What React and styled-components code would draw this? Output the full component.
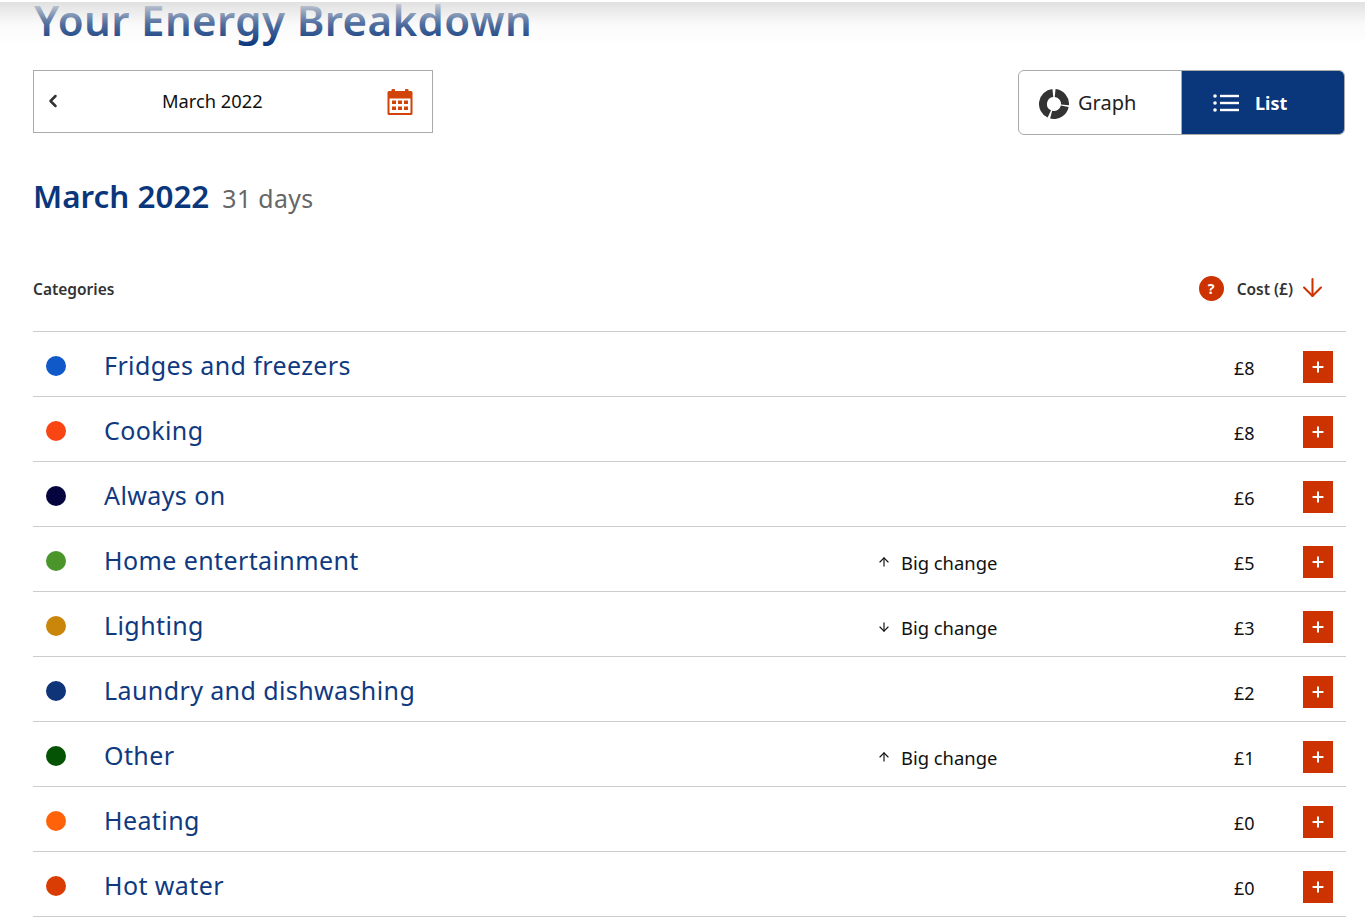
import React from 'react'
import styled, { createGlobalStyle } from 'styled-components'
import { ChevronLeft, ArrowDown, ArrowUp, Plus } from 'lucide-react'

const CATEGORIES = [
  { name: 'Fridges and freezers', color: '#0f5ac8', cost: '£8' },
  { name: 'Cooking', color: '#f94413', cost: '£8' },
  { name: 'Always on', color: '#04043f', cost: '£6' },
  { name: 'Home entertainment', color: '#4a962b', cost: '£5', change: 'up' },
  { name: 'Lighting', color: '#c9860a', cost: '£3', change: 'down' },
  { name: 'Laundry and dishwashing', color: '#0f3478', cost: '£2' },
  { name: 'Other', color: '#045204', cost: '£1', change: 'up' },
  { name: 'Heating', color: '#ff6208', cost: '£0' },
  { name: 'Hot water', color: '#d93d04', cost: '£0' },
]

export default function App() {
  return (
    <Page>
      <GlobalStyle />
      <TopShade />
      <TitleBar>
        <Title>Your Energy Breakdown</Title>
      </TitleBar>
      <Controls>
        <MonthPicker>
          <ChevronLeft size={20} strokeWidth={3} color="#333" />
          <MonthLabel>March 2022</MonthLabel>
          <CalendarIcon />
        </MonthPicker>
        <ViewToggle>
          <GraphButton>
            <DonutIcon />
            Graph
          </GraphButton>
          <ListButton>
            <ListIcon />
            List
          </ListButton>
        </ViewToggle>
      </Controls>
      <PeriodHeading>
        <PeriodTitle>March 2022</PeriodTitle>
        <PeriodDays>31 days</PeriodDays>
      </PeriodHeading>
      <TableHead>
        <HeadLabel>Categories</HeadLabel>
        <CostHead>
          <HelpBadge>?</HelpBadge>
          <HeadLabel>Cost (£)</HeadLabel>
          <SortArrow>
            <ArrowDown size={29} strokeWidth={1.7} color="#cc3300" />
          </SortArrow>
        </CostHead>
      </TableHead>
      <div>
        {CATEGORIES.map(({ name, color, cost, change }) => (
          <Row key={name}>
            <Dot $color={color} />
            <RowName>{name}</RowName>
            <Change>
              {change === 'up' && <ArrowUp size={14} strokeWidth={2} />}
              {change === 'down' && <ArrowDown size={14} strokeWidth={2} />}
              {change && <span>Big change</span>}
            </Change>
            <Cost>{cost}</Cost>
            <ExpandButton>
              <Plus size={16} strokeWidth={3} color="#fff" />
            </ExpandButton>
          </Row>
        ))}
      </div>
    </Page>
  )
}

function CalendarIcon() {
  return (
    <svg width="28" height="28" viewBox="0 0 28 28" fill="#d24309">
      <rect x="5.500" y="1" width="3.500" height="6" rx="1" />
      <rect x="19" y="1" width="3.500" height="6" rx="1" />
      <path d="M3 3h22a1.500 1.500 0 0 1 1.500 1.500v21a1.500 1.500 0 0 1-1.500 1.500H3a1.500 1.500 0 0 1-1.500-1.500v-21A1.500 1.500 0 0 1 3 3zm0.500 7.500v14.500h21V10.500z" />
      <rect x="6" y="12.500" width="4" height="3.500" />
      <rect x="12" y="12.500" width="4" height="3.500" />
      <rect x="18" y="12.500" width="4" height="3.500" />
      <rect x="6" y="18.500" width="4" height="3.500" />
      <rect x="12" y="18.500" width="4" height="3.500" />
      <rect x="18" y="18.500" width="4" height="3.500" />
    </svg>
  )
}

function DonutIcon() {
  return (
    <svg width="30" height="30" viewBox="0 0 30 30" fill="none" stroke="#333" strokeWidth="8">
      <path d="M16.150 4.060A11 11 0 0 1 25.960 15.960" />
      <path d="M25.760 17.290A11 11 0 0 1 12.150 25.630" />
      <path d="M10.350 24.970A11 11 0 0 1 13.850 4.060" />
    </svg>
  )
}

function ListIcon() {
  return (
    <svg width="26" height="18" viewBox="0 0 26 18" fill="#fff">
      <circle cx="2" cy="2" r="1.800" />
      <circle cx="2" cy="9" r="1.800" />
      <circle cx="2" cy="16" r="1.800" />
      <rect x="7" y="0.800" width="19" height="2.400" />
      <rect x="7" y="7.800" width="19" height="2.400" />
      <rect x="7" y="14.800" width="19" height="2.400" />
    </svg>
  )
}

const GlobalStyle = createGlobalStyle`
  body {
    margin: 0;
    background: #fff;
    font-family: 'Noto Sans', 'Open Sans', sans-serif;
    overflow-x: hidden;
  }
`

const Page = styled.div`
  position: relative;
  width: 1365px;
  height: 923px;
  overflow: hidden;
  padding: 0 19px 0 33px;
  box-sizing: border-box;
`

const TopShade = styled.div`
  position: absolute;
  top: 2px;
  left: 0;
  right: 0;
  height: 44px;
  background: linear-gradient(
    to bottom,
    rgba(222, 222, 222, 0.92),
    rgba(238, 238, 238, 0.3) 50%,
    rgba(255, 255, 255, 0)
  );
  pointer-events: none;
`

const TitleBar = styled.div`
  height: 70px;
`

const Title = styled.h1`
  margin: 0 0 0 1px;
  font-size: 42px;
  line-height: 40px;
  font-weight: 600;
  letter-spacing: 0.4px;
  color: #0a367c;
  white-space: nowrap;
`

const Controls = styled.div`
  display: flex;
  justify-content: space-between;
  align-items: flex-start;
`

const MonthPicker = styled.div`
  width: 400px;
  height: 63px;
  box-sizing: border-box;
  border: 1px solid #aaa;
  display: flex;
  align-items: center;
  padding: 0 18px 0 9px;
  & > svg:first-child {
    margin-bottom: 2px;
  }
`

const MonthLabel = styled.span`
  font-size: 18.300px;
  color: #111;
  margin: 0 auto 2px 99px;
`

const ViewToggle = styled.div`
  display: flex;
  width: 327px;
  height: 65px;
  margin-right: 1px;
  box-sizing: border-box;
  border: 1px solid #aaa;
  border-radius: 6px;
  overflow: hidden;
`

const GraphButton = styled.div`
  width: 163px;
  box-sizing: border-box;
  border-right: 1px solid #aaa;
  display: flex;
  align-items: center;
  gap: 9px;
  padding-left: 20px;
  font-size: 20px;
  color: #222;
  & > svg {
    margin-top: 2px;
  }
`

const ListButton = styled.div`
  flex: 1;
  display: flex;
  align-items: center;
  gap: 16px;
  padding-left: 31px;
  font-size: 18px;
  font-weight: 700;
  color: #fff;
  background: #0a367c;
`

const PeriodHeading = styled.div`
  display: flex;
  align-items: baseline;
  gap: 13px;
  height: 113px;
  padding-top: 40px;
  box-sizing: border-box;
`

const PeriodTitle = styled.h2`
  margin: 0;
  font-size: 31.400px;
  line-height: 42px;
  font-weight: 600;
  color: #0a367c;
`

const PeriodDays = styled.span`
  font-size: 24.800px;
  letter-spacing: 0.4px;
  color: #666;
`

const TableHead = styled.div`
  display: flex;
  justify-content: space-between;
  align-items: center;
  height: 84px;
  box-sizing: border-box;
  padding: 0 23px 2px 0;
  border-bottom: 1px solid #ccc;
`

const HeadLabel = styled.span`
  font-size: 15.500px;
  font-weight: 600;
  color: #333;
`

const CostHead = styled.div`
  display: flex;
  align-items: center;
`

const HelpBadge = styled.span`
  width: 25px;
  height: 25px;
  border-radius: 50%;
  background: #cc3300;
  color: #fff;
  font-size: 14px;
  font-weight: 700;
  display: flex;
  align-items: center;
  justify-content: center;
  margin-right: 13px;
`

const SortArrow = styled.span`
  display: flex;
  margin: -2px -4px 0 5px;
`

const Row = styled.div`
  display: grid;
  grid-template-columns: 71px 773px 357px 69px 43px;
  align-items: center;
  height: 65px;
  box-sizing: border-box;
  border-bottom: 1px solid #ccc;
`

const Dot = styled.span`
  width: 20px;
  height: 20px;
  margin: 4px 0 0 13px;
  border-radius: 50%;
  background: ${(props) => props.$color};
`

const RowName = styled.span`
  padding-top: 2px;
  font-size: 25px;
  letter-spacing: 0.4px;
  color: #0f3a7f;
`

const Change = styled.span`
  display: flex;
  align-items: center;
  gap: 10px;
  padding-top: 6px;
  font-size: 18.400px;
  color: #111;
`

const Cost = styled.span`
  padding-top: 8px;
  font-size: 18px;
  color: #111;
`

const ExpandButton = styled.span`
  width: 30px;
  height: 32px;
  margin-top: 6px;
  background: #cc3300;
  display: flex;
  align-items: center;
  justify-content: center;
`
